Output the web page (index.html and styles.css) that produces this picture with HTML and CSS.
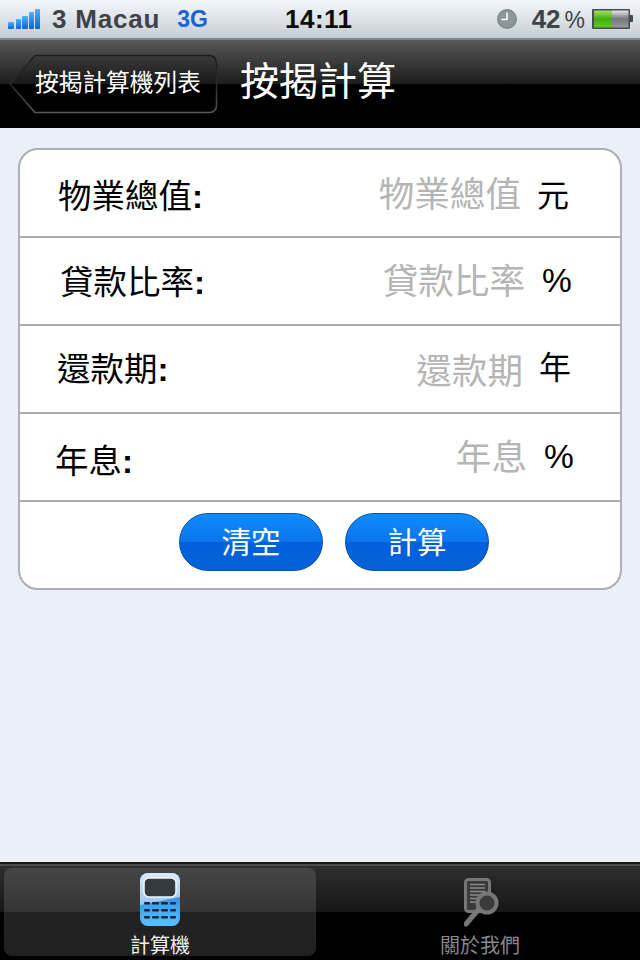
FILE: index.html
```html
<!DOCTYPE html>
<html lang="zh-Hant">
<head>
<meta charset="utf-8">
<title>按揭計算</title>
<link rel="stylesheet" href="styles.css">
</head>
<body>
<div class="phone">
  <header class="status">
    <div class="status-left">
      <svg class="signal" width="32" height="22" viewBox="0 0 32 22">
        <defs><linearGradient id="sig" x1="0" y1="0" x2="0" y2="1"><stop offset="0" stop-color="#4db0ff"/><stop offset="1" stop-color="#0a63d8"/></linearGradient></defs>
        <rect x="0" y="14" width="6" height="7" rx="1" fill="url(#sig)"/>
        <rect x="8" y="11" width="5" height="10" rx="1" fill="url(#sig)"/>
        <rect x="14" y="8" width="6" height="13" rx="1" fill="url(#sig)"/>
        <rect x="21" y="4" width="5" height="17" rx="1" fill="url(#sig)"/>
        <rect x="27" y="1" width="5" height="20" rx="1" fill="url(#sig)"/>
      </svg>
      <span class="carrier">3 Macau</span>
      <span class="net">3G</span>
    </div>
    <span class="time">14:11</span>
    <div class="status-right">
      <svg class="clock" width="22" height="22" viewBox="0 0 22 22">
        <circle cx="11" cy="11" r="10" fill="#7d8a8c"/>
        <circle cx="11" cy="11" r="8.6" fill="#8b9799"/>
        <path d="M11 4.500V11.500H5.500" fill="none" stroke="#fff" stroke-width="1.600"/>
      </svg>
      <span class="batt-text">42<span class="pct">%</span></span>
      <svg class="battery" width="42" height="22" viewBox="0 0 42 22">
        <defs>
          <linearGradient id="bg" x1="0" y1="0" x2="0" y2="1"><stop offset="0" stop-color="#a8e060"/><stop offset=".5" stop-color="#3fae0c"/><stop offset="1" stop-color="#5ccc1c"/></linearGradient>
          <linearGradient id="be" x1="0" y1="0" x2="0" y2="1"><stop offset="0" stop-color="#e8e8e8"/><stop offset=".5" stop-color="#777"/><stop offset="1" stop-color="#999"/></linearGradient>
        </defs>
        <rect x="1" y="1" width="38" height="20" rx="1" fill="#444c55"/>
        <rect x="3" y="2.500" width="18" height="17" fill="url(#bg)"/>
        <rect x="21" y="2.500" width="16.500" height="17" fill="url(#be)"/>
        <path d="M39 7h2a1 1 0 0 1 1 1v5a1 1 0 0 1-1 1h-2z" fill="#444c55"/>
      </svg>
    </div>
  </header>

  <nav class="nav">
    <div class="back">
      <svg class="back-shape" width="210" height="60" viewBox="0 0 210 60">
        <defs><linearGradient id="bs" x1="0" y1="0" x2="0" y2="1"><stop offset="0" stop-color="#1e1e1e"/><stop offset=".55" stop-color="#2c2c2c"/><stop offset="1" stop-color="#5a5a5a"/></linearGradient></defs>
        <path d="M1 30 L26 1.500 H200 Q207.500 1.500 207.500 9 V51 Q207.500 58.500 200 58.500 H26 Z" fill="rgba(0,0,0,.12)" stroke="url(#bs)" stroke-width="1.500"/>
      </svg>
      <span class="back-text">按揭計算機列表</span>
    </div>
    <h1 class="title">按揭計算</h1>
  </nav>

  <main class="content">
    <section class="card">
      <div class="row row-a">
        <span class="label">物業總值<b>:</b></span>
        <span class="ph">物業總值</span>
        <span class="unit">元</span>
      </div>
      <div class="row row-b">
        <span class="label">貸款比率<b>:</b></span>
        <span class="ph">貸款比率</span>
        <span class="unit">%</span>
      </div>
      <div class="row row-c">
        <span class="label">還款期<b>:</b></span>
        <span class="ph">還款期</span>
        <span class="unit">年</span>
      </div>
      <div class="row row-d">
        <span class="label">年息<b>:</b></span>
        <span class="ph">年息</span>
        <span class="unit">%</span>
      </div>
      <div class="actions">
        <button class="btn">清空</button>
        <button class="btn">計算</button>
      </div>
    </section>
  </main>

  <footer class="tabs">
    <div class="tab tab-on">
      <svg width="42" height="54" viewBox="0 0 42 54">
        <defs>
          <linearGradient id="calb" x1="0" y1="0" x2="0" y2="1"><stop offset=".45" stop-color="#2b95ee"/><stop offset="1" stop-color="#5cc0ff"/></linearGradient>
          <linearGradient id="calt" x1="0" y1="0" x2="0" y2="1"><stop offset="0" stop-color="#dcebf8"/><stop offset="1" stop-color="#9dc4ec"/></linearGradient>
          <clipPath id="calc"><rect x="1" y="1" width="40" height="53" rx="8"/></clipPath>
        </defs>
        <rect x="1" y="1" width="40" height="53" rx="8" fill="url(#calb)"/>
        <path clip-path="url(#calc)" d="M1 1H41V25L1 33Z" fill="url(#calt)"/>
        <rect x="5" y="6" width="32" height="19" rx="5" fill="#37393b" stroke="#f0f5fa" stroke-width="1.600"/>
        <g fill="#15263a">
          <rect x="5" y="30" width="6" height="2.500" rx="1"/><rect x="13" y="30" width="7" height="2.500" rx="1"/><rect x="22" y="30" width="7" height="2.500" rx="1"/><rect x="31" y="30" width="6" height="2.500" rx="1"/>
          <rect x="5" y="37" width="6" height="2.500" rx="1"/><rect x="13" y="37" width="7" height="2.500" rx="1"/><rect x="22" y="37" width="7" height="2.500" rx="1"/><rect x="31" y="37" width="6" height="2.500" rx="1"/>
          <rect x="5" y="44" width="6" height="2.500" rx="1"/><rect x="13" y="44" width="7" height="2.500" rx="1"/><rect x="22" y="44" width="7" height="2.500" rx="1"/><rect x="31" y="44" width="6" height="2.500" rx="1"/>
        </g>
      </svg>
      <span class="tab-label">計算機</span>
    </div>
    <div class="tab tab-off">
      <svg width="36" height="50" viewBox="0 0 36 50">
        <rect x="1.500" y="1.500" width="24" height="32" rx="3" fill="#3a3a3a" stroke="#777" stroke-width="3"/>
        <path d="M6 6.500H21M6 10H21M6 13.500H21M6 17H17M6 20.500H14M6 24H13" stroke="#8a8a8a" stroke-width="1.500"/>
        <path d="M14 32 L2 46" stroke="#777" stroke-width="5" stroke-linecap="round"/>
        <circle cx="23" cy="25" r="9.500" fill="#3b3b3b" stroke="#777" stroke-width="4"/>
      </svg>
      <span class="tab-label">關於我們</span>
    </div>
  </footer>
</div>
</body>
</html>
```
FILE: styles.css
```css
* { box-sizing: border-box; }
html, body { margin: 0; padding: 0; }
body { font-family: "Liberation Sans", "Noto Sans CJK TC", sans-serif; }
.phone { width: 640px; height: 960px; display: flex; flex-direction: column; overflow: hidden; background: #ebf0f8; }

.status { height: 40px; flex: none; position: relative; display: flex; align-items: center; justify-content: space-between; padding: 0 7px 0 8px; background: linear-gradient(#f3f7fb, #c5ced3); border-bottom: 2px solid #7c858b; }
.status-left, .status-right { display: flex; align-items: center; }
.carrier { margin-left: 12px; font-size: 26px; font-weight: bold; letter-spacing: .8px; color: #3f4347; }
.net { margin-left: 17px; font-size: 23px; font-weight: bold; color: #1a62cf; }
.time { position: absolute; left: 285px; top: 4px; font-size: 26px; font-weight: bold; letter-spacing: .5px; color: #0c0c0c; }
.batt-text { margin: 0 6px 0 14px; font-size: 26px; font-weight: bold; color: #3f4347; }
.pct { margin-left: 4px; font-weight: normal; font-size: 23px; }

.nav { height: 88px; flex: none; display: flex; align-items: center; padding: 0 0 0 9px; gap: 22px; background: linear-gradient(#585858 0, #1c1c1c 50%, #000 50%, #000 100%); }
.back { position: relative; width: 209px; height: 60px; display: flex; align-items: center; }
.back-shape { position: absolute; left: 0; top: 0; }
.back-text { position: relative; margin: 0 0 4px 26px; font-family: "Noto Sans CJK TC", sans-serif; font-size: 23.7px; line-height: 1; color: #fff; }
.title { margin: 0 0 12px; font-family: "Noto Sans CJK TC", sans-serif; font-size: 39px; font-weight: 400; line-height: 1; color: #fff; }

.content { flex: 1; padding: 20px 18px 0; }
.card { height: 442px; background: #fff; border: 2px solid #aeaeb0; border-radius: 20px; display: flex; flex-direction: column; }
.row { height: 88px; flex: none; display: flex; align-items: center; border-bottom: 2px solid #aeaeb0; font-family: "Noto Sans CJK TC", sans-serif; }
.row-a { padding: 0 51px 0 38px; }
.row-b { padding: 0 46px 0 40px; }
.row-c { padding: 0 49px 0 37px; }
.row-d { padding: 0 44px 0 35px; }
.label { font-size: 33.5px; line-height: 1; color: #000; }
.label b { font-family: "Liberation Sans", sans-serif; font-size: 33px; font-weight: bold; }
.ph { margin-left: auto; font-size: 35.6px; line-height: 1; color: #b5b5b5; }
.unit { margin-left: 16px; width: 32px; font-size: 32px; line-height: 1; color: #000; }
.row-b .unit, .row-d .unit { margin-left: 17px; font-family: "Liberation Sans", sans-serif; font-size: 33.5px; }

.row-a .label { margin-top: 4px; }
.row-a .ph { margin-bottom: 2px; }
.row-b .ph { margin-bottom: 4px; }
.row-c .label { margin-bottom: 2px; }
.row-c .unit { margin-bottom: 8px; }
.row-d .label { margin-top: 6px; }
.row-d .ph { margin-bottom: 4px; }

.actions { flex: 1; display: flex; justify-content: center; align-items: center; gap: 22px; padding: 0 0 6px 28px; }
.btn { width: 144px; height: 58px; padding: 0 0 2px; border: 1px solid #0a4fa8; border-radius: 29px; background: linear-gradient(#0f8cfc 0, #0a74ec 50%, #0060dc 50%, #0562d8 100%); color: #fff; font-family: "Noto Sans CJK TC", sans-serif; font-size: 29.5px; line-height: 1; }

.tabs { height: 98px; flex: none; display: grid; grid-template-columns: 1fr 1fr; padding: 4px; gap: 8px; border-top: 2px solid #161616; box-shadow: inset 0 2px 0 #4a4a4a; background: linear-gradient(#303030 0, #161616 50%, #000 50%, #000 100%); }
.tab { display: flex; flex-direction: column; align-items: center; border-radius: 8px; }
.tab-on { padding-top: 4px; background: linear-gradient(#454545 0, #353535 50%, #222 50%, #212121 100%); }
.tab-off { padding-top: 10px; }
.tab-off svg { margin-left: 4px; }
.tab-label { margin-top: 8px; font-family: "Noto Sans CJK TC", sans-serif; font-size: 20px; line-height: 22px; white-space: nowrap; }
.tab-on .tab-label { color: #f0f0f0; }
.tab-off .tab-label { margin-top: 6px; color: #888; }
```
